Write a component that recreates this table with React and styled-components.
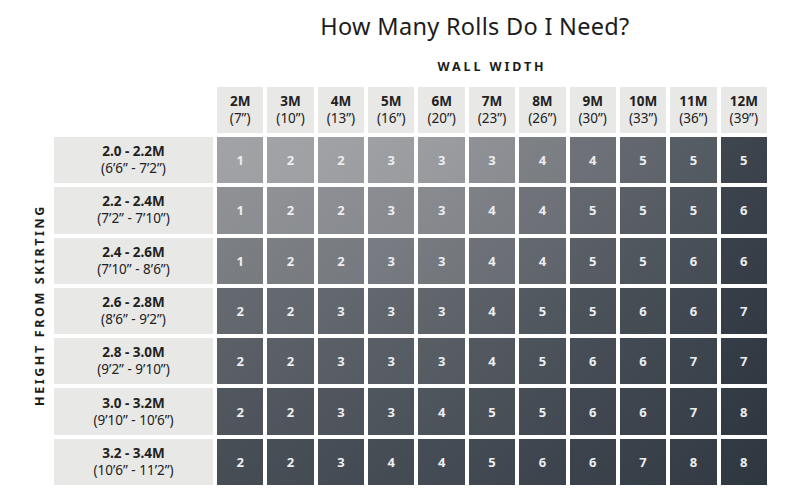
import React from "react";
import styled, { createGlobalStyle } from "styled-components";

const GlobalStyle = createGlobalStyle`
	body {
		margin: 0;
		background: #ffffff;
		font-family: "Noto Sans", "Liberation Sans", sans-serif;
	}
`;

const Page = styled.div`
	width: 800px;
	height: 504px;
	overflow: hidden;
	display: flex;
	flex-direction: column;
`;
const Title = styled.h1`
	margin: 0;
	padding: 12px 0 0 150px;
	height: 28px;
	font-size: 23.5px;
	line-height: 28px;
	font-weight: 400;
	text-align: center;
	color: #1c1c1c;
	letter-spacing: 0.3px;
`;
const Chart = styled.div`
	width: 767px;
	display: grid;
	grid-template-columns: 50px 159px repeat(11, 1fr);
	grid-template-rows: 41px 46px repeat(7, 46.3px);
	column-gap: 4px;
	row-gap: 4px;
	margin-top: 2px;
`;
const WallWidth = styled.div`
	grid-column: 3 / span 11;
	display: flex;
	align-items: flex-end;
	justify-content: center;
	padding-bottom: 8px;
	font-size: 12.5px;
	font-weight: 700;
	letter-spacing: 2.9px;
	color: #1c1c1c;
`;
const SideLabel = styled.div`
	grid-column: 1;
	grid-row: 3 / span 7;
	display: flex;
	align-items: center;
	justify-content: flex-end;
	padding-right: 2px;
`;
const SideText = styled.span`
	writing-mode: vertical-rl;
	transform: rotate(180deg);
	font-size: 12.5px;
	font-weight: 700;
	letter-spacing: 2.6px;
	color: #1c1c1c;
	white-space: nowrap;
	margin-bottom: 12px;
`;
const HeadCell = styled.div`
	background: #e8e8e6;
	display: flex;
	flex-direction: column;
	align-items: center;
	justify-content: center;
	color: #222222;
	line-height: 17px;
`;
const Strong = styled.span`
	font-weight: 700;
	font-size: 13.5px;
`;
const Sub = styled.span`
	font-weight: 400;
	font-size: 13.5px;
`;
const ValueCell = styled.div`
	background: linear-gradient(135deg, ${(p) => p.$light} 0%, ${(p) => p.$bg} 100%);
	display: flex;
	align-items: center;
	justify-content: center;
	color: #eceef0;
	font-size: 13px;
	font-weight: 700;
`;

const widths = [
	["2M", "(7”)"],
	["3M", "(10”)"],
	["4M", "(13”)"],
	["5M", "(16”)"],
	["6M", "(20”)"],
	["7M", "(23”)"],
	["8M", "(26”)"],
	["9M", "(30”)"],
	["10M", "(33”)"],
	["11M", "(36”)"],
	["12M", "(39”)"],
];

const heights = [
	{ label: "2.0 - 2.2M", imperial: "(6’6” - 7’2”)", rolls: [1, 2, 2, 3, 3, 3, 4, 4, 5, 5, 5] },
	{ label: "2.2 - 2.4M", imperial: "(7’2” - 7’10”)", rolls: [1, 2, 2, 3, 3, 4, 4, 5, 5, 5, 6] },
	{ label: "2.4 - 2.6M", imperial: "(7’10” - 8’6”)", rolls: [1, 2, 2, 3, 3, 4, 4, 5, 5, 6, 6] },
	{ label: "2.6 - 2.8M", imperial: "(8’6” - 9’2”)", rolls: [2, 2, 3, 3, 3, 4, 5, 5, 6, 6, 7] },
	{ label: "2.8 - 3.0M", imperial: "(9’2” - 9’10”)", rolls: [2, 2, 3, 3, 3, 4, 5, 6, 6, 7, 7] },
	{ label: "3.0 - 3.2M", imperial: "(9’10” - 10’6”)", rolls: [2, 2, 3, 3, 4, 5, 5, 6, 6, 7, 8] },
	{ label: "3.2 - 3.4M", imperial: "(10’6” - 11’2”)", rolls: [2, 2, 3, 4, 4, 5, 6, 6, 7, 8, 8] },
];

// shade of each cell: light grey top-left, dark slate bottom-right
const rowShade = [0.03, 0.2, 0.36, 0.55, 0.63, 0.71, 0.79];
const colShade = [0, 0, 0.02, 0.04, 0.07, 0.18, 0.32, 0.45, 0.55, 0.65, 0.87];
const LIGHT = [162, 163, 166];
const DARK = [43, 51, 61];

const shade = (r, c, lift = 0) => {
	const t = Math.max(0, 1 - (1 - rowShade[r]) * (1 - colShade[c]) - lift);
	const rgb = LIGHT.map((l, i) => Math.round(l + (DARK[i] - l) * t));
	return `rgb(${rgb.join(",")})`;
};

const App = () => {
	return (
		<Page>
			<GlobalStyle />
			<Title>How Many Rolls Do I Need?</Title>
			<Chart>
				<div />
				<div />
				<WallWidth>WALL WIDTH</WallWidth>
				<div />
				<div />
				{widths.map(([m, inch]) => (
					<HeadCell key={m}>
						<Strong>{m}</Strong>
						<Sub>{inch}</Sub>
					</HeadCell>
				))}
				<SideLabel>
					<SideText>HEIGHT FROM SKIRTING</SideText>
				</SideLabel>
				{heights.map((row, r) => (
					<React.Fragment key={row.label}>
						<HeadCell>
							<Strong>{row.label}</Strong>
							<Sub>{row.imperial}</Sub>
						</HeadCell>
						{row.rolls.map((n, c) => (
							<ValueCell key={c} $bg={shade(r, c)} $light={shade(r, c, 0.04)}>
								{n}
							</ValueCell>
						))}
					</React.Fragment>
				))}
			</Chart>
		</Page>
	);
};

export default App;
